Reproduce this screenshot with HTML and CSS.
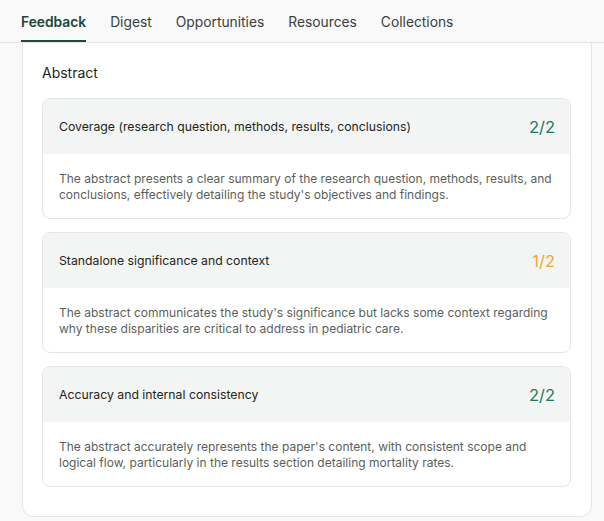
FILE: index.html
```html
<!DOCTYPE html>
<html>
<head>
<meta charset="utf-8">
<link rel="stylesheet" href="styles.css">
</head>
<body>
<nav class="tabs">
  <a class="tab active">Feedback</a>
  <a class="tab">Digest</a>
  <a class="tab">Opportunities</a>
  <a class="tab">Resources</a>
  <a class="tab">Collections</a>
</nav>
<section class="panel">
  <h2 class="title">Abstract</h2>
  <div class="cards">
    <div class="card">
      <div class="card-head">
        <span class="crit">Coverage (research question, methods, results, conclusions)</span>
        <span class="score good">2/2</span>
      </div>
      <p class="card-body">The abstract presents a clear summary of the research question, methods, results, and conclusions, effectively detailing the study's objectives and findings.</p>
    </div>
    <div class="card">
      <div class="card-head">
        <span class="crit">Standalone significance and context</span>
        <span class="score mid">1/2</span>
      </div>
      <p class="card-body">The abstract communicates the study's significance but lacks some context regarding why these disparities are critical to address in pediatric care.</p>
    </div>
    <div class="card">
      <div class="card-head">
        <span class="crit">Accuracy and internal consistency</span>
        <span class="score good">2/2</span>
      </div>
      <p class="card-body">The abstract accurately represents the paper's content, with consistent scope and logical flow, particularly in the results section detailing mortality rates.</p>
    </div>
  </div>
</section>
</body>
</html>
```
FILE: styles.css
```css
html, body {
  margin: 0;
  padding: 0;
  background: #f8f9f8;
  font-family: Inter, "Noto Sans", sans-serif;
  color: #1f2421;
}
.tabs {
  display: flex;
  gap: 24px;
  padding-left: 21px;
  height: 42px;
  border-bottom: 1px solid #e4e6e4;
}
.tab {
  font-size: 13.8px;
  color: #3a403c;
  line-height: 20px;
  padding-top: 12px;
  height: 42px;
  box-sizing: border-box;
  border-bottom: 2px solid transparent;
}
.tab.active {
  color: #1d4638;
  font-weight: 600;
  border-bottom-color: #1d4a3b;
}
.panel {
  margin: 0 12px 0 22px;
  background: #fff;
  border: 1px solid #e4e6e4;
  border-top: none;
  border-radius: 0 0 12px 12px;
  padding: 20px 20px 29px 19px;
}
.title {
  margin: 0 0 15px;
  font-size: 14px;
  font-weight: 400;
  line-height: 20px;
  color: #1f2421;
}
.cards {
  display: flex;
  flex-direction: column;
  gap: 13px;
}
.card {
  border: 1px solid #e3e6e4;
  border-radius: 8px;
  overflow: hidden;
  background: #fff;
}
.card-head {
  display: flex;
  align-items: center;
  justify-content: space-between;
  height: 55px;
  padding: 0 15px 0 16px;
  background: #f3f5f4;
}
.crit {
  font-size: 12.25px;
  color: #1f2421;
}
.score {
  font-size: 16.5px;
}
.score.good { color: #1e7a52; }
.score.mid { color: #f0a338; }
.card-body {
  margin: 0;
  padding: 17px 16px 15px;
  font-size: 12px;
  line-height: 16px;
  color: #5a5f5c;
}
```
